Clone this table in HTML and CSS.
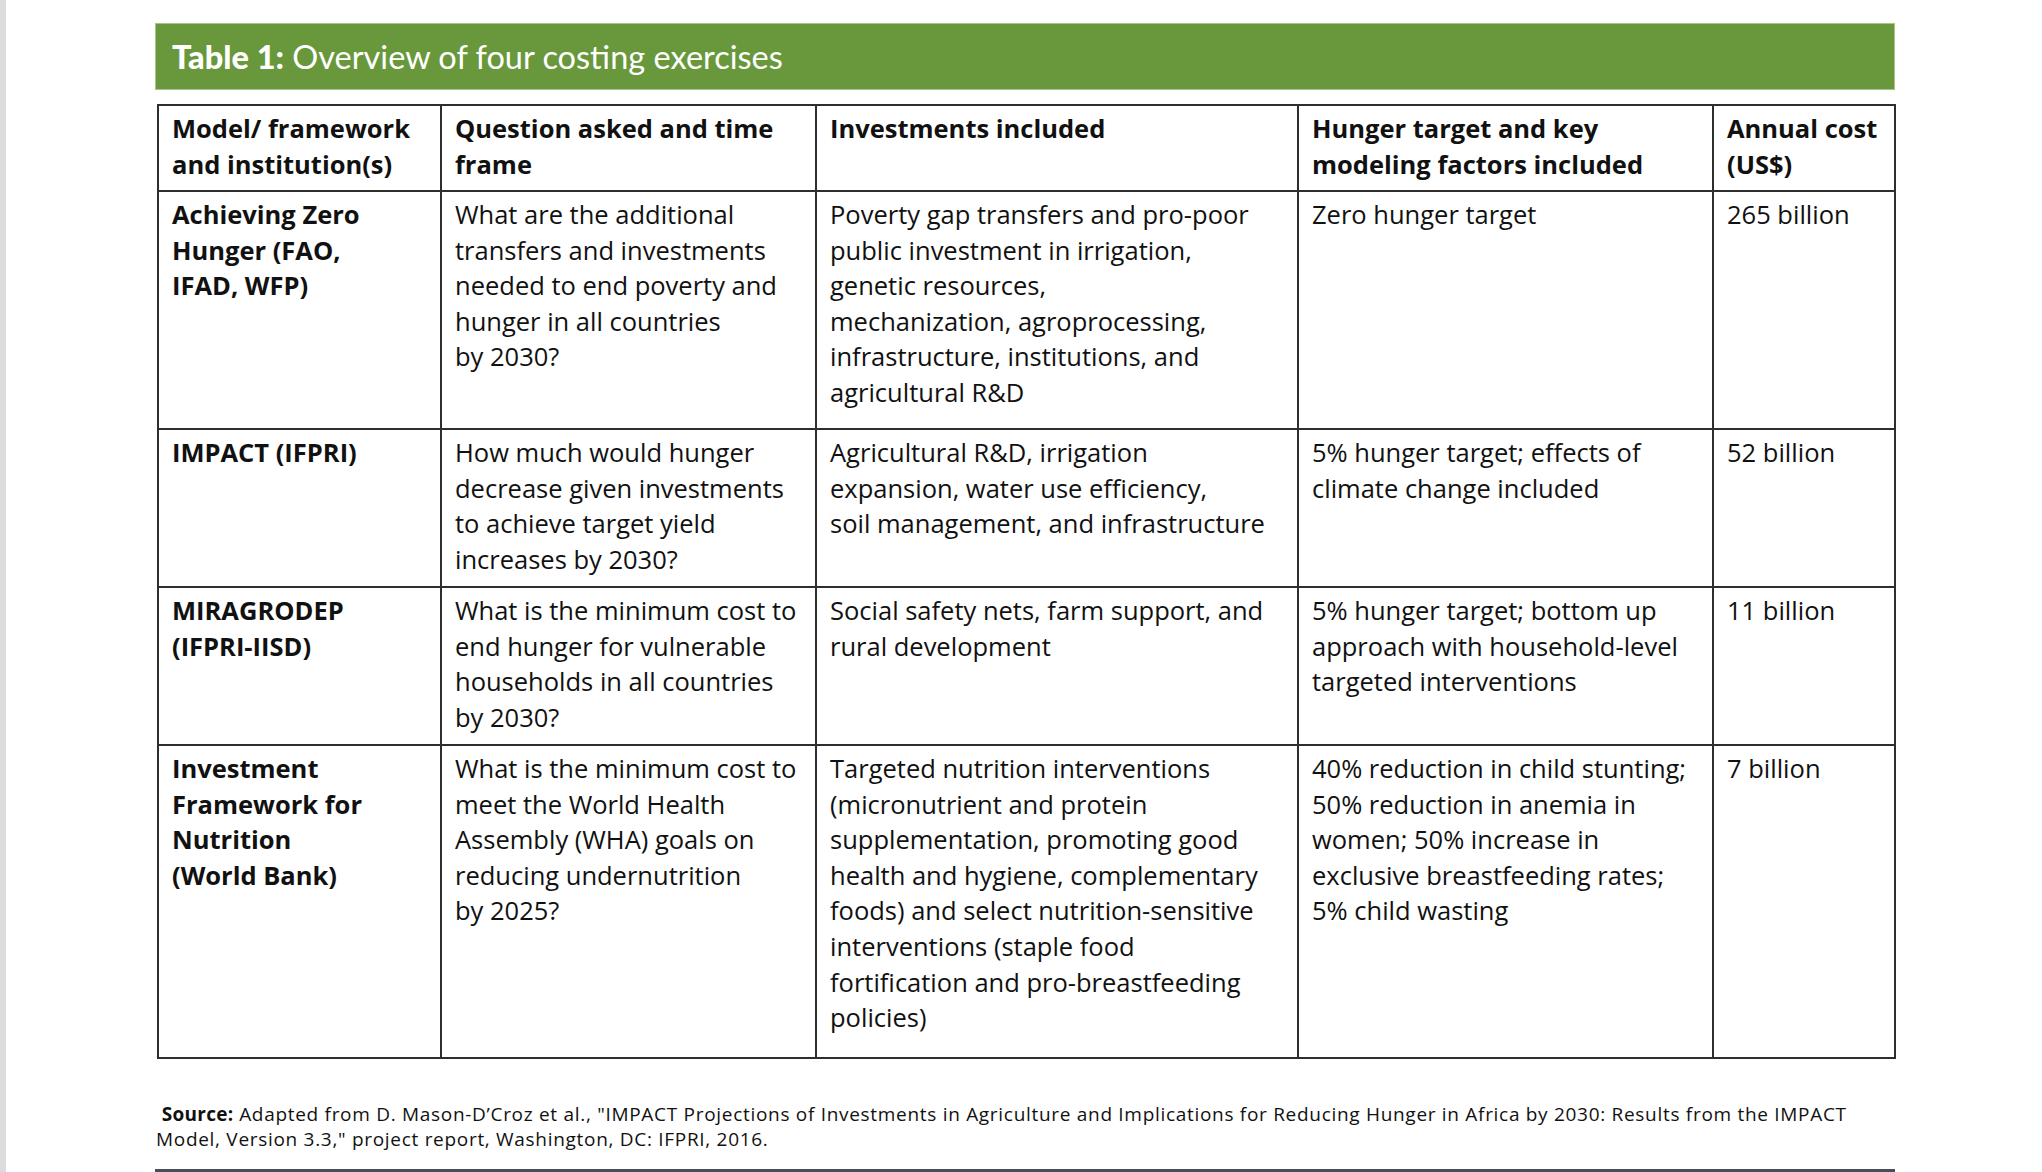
FILE: index.html
```html
<!DOCTYPE html>
<html lang="en">
<head>
<meta charset="utf-8">
<title>Table 1: Overview of four costing exercises</title>
<link rel="stylesheet" href="styles.css">
</head>
<body>
<div class="page">
  <div class="title-bar"><span class="title-label">Table 1:</span>&nbsp;Overview of four costing exercises</div>
  <table class="costs">
    <colgroup>
      <col class="c1"><col class="c2"><col class="c3"><col class="c4"><col class="c5">
    </colgroup>
    <thead>
      <tr class="row-head">
        <th>Model/ framework<br>and institution(s)</th>
        <th>Question asked and time<br>frame</th>
        <th>Investments included</th>
        <th>Hunger target and key<br>modeling factors included</th>
        <th>Annual cost<br>(US$)</th>
      </tr>
    </thead>
    <tbody>
      <tr class="row-1">
        <td class="name">Achieving Zero<br>Hunger (FAO,<br>IFAD, WFP)</td>
        <td>What are the additional<br>transfers and investments<br>needed to end poverty and<br>hunger in all countries<br>by 2030?</td>
        <td>Poverty gap transfers and pro-poor<br>public investment in irrigation,<br>genetic resources,<br>mechanization, agroprocessing,<br>infrastructure, institutions, and<br>agricultural R&amp;D</td>
        <td>Zero hunger target</td>
        <td>265 billion</td>
      </tr>
      <tr class="row-2">
        <td class="name">IMPACT (IFPRI)</td>
        <td>How much would hunger<br>decrease given investments<br>to achieve target yield<br>increases by 2030?</td>
        <td>Agricultural R&amp;D, irrigation<br>expansion, water use efficiency,<br>soil management, and infrastructure</td>
        <td>5% hunger target; effects of<br>climate change included</td>
        <td>52 billion</td>
      </tr>
      <tr class="row-3">
        <td class="name">MIRAGRODEP<br>(IFPRI-IISD)</td>
        <td>What is the minimum cost to<br>end hunger for vulnerable<br>households in all countries<br>by 2030?</td>
        <td>Social safety nets, farm support, and<br>rural development</td>
        <td>5% hunger target; bottom up<br>approach with household-level<br>targeted interventions</td>
        <td>11 billion</td>
      </tr>
      <tr class="row-4">
        <td class="name">Investment<br>Framework for<br>Nutrition<br>(World Bank)</td>
        <td>What is the minimum cost to<br>meet the World Health<br>Assembly (WHA) goals on<br>reducing undernutrition<br>by 2025?</td>
        <td>Targeted nutrition interventions<br>(micronutrient and protein<br>supplementation, promoting good<br>health and hygiene, complementary<br>foods) and select nutrition-sensitive<br>interventions (staple food<br>fortification and pro-breastfeeding<br>policies)</td>
        <td>40% reduction in child stunting;<br>50% reduction in anemia in<br>women; 50% increase in<br>exclusive breastfeeding rates;<br>5% child wasting</td>
        <td>7 billion</td>
      </tr>
    </tbody>
  </table>
  <p class="source">&nbsp;<strong>Source:</strong> Adapted from D. Mason-D’Croz et al., "IMPACT Projections of Investments in Agriculture and Implications for Reducing Hunger in Africa by 2030: Results from the IMPACT<br>Model, Version 3.3," project report, Washington, DC: IFPRI, 2016.</p>
  <div class="rule"></div>
</div>
</body>
</html>
```
FILE: styles.css
```css
html, body {
  margin: 0;
  padding: 0;
  background: #ffffff;
}

body {
  border-left: 6px solid #dcdcdf;
  min-height: 1172px;
  box-sizing: border-box;
  color: #111111;
  font-family: "Open Sans", "Liberation Sans", sans-serif;
}

.page {
  margin-left: 149px;
  width: 1740px;
  padding-top: 23px;
}

.title-bar {
  height: 67px;
  box-sizing: border-box;
  background: #68983b;
  border: 1px solid #a8c487;
  display: flex;
  align-items: center;
  padding-left: 16px;
  color: #ffffff;
  font-family: Lato, "Open Sans", sans-serif;
  font-size: 32.5px;
  white-space: nowrap;
}

.title-label {
  font-weight: 900;
}

.costs {
  margin-top: 14px;
  margin-left: 2px;
  width: 1737px;
  border-collapse: collapse;
  table-layout: fixed;
}

.c1 { width: 283px; }
.c2 { width: 375px; }
.c3 { width: 482px; }
.c4 { width: 415px; }
.c5 { width: 182px; }

.costs th,
.costs td {
  border: 2px solid #2e2e2e;
  vertical-align: top;
  text-align: left;
  padding: 5px 10px 0 13px;
  font-size: 25.5px;
  line-height: 35.6px;
  white-space: nowrap;
  color: #111111;
}

.costs th {
  font-weight: 700;
}

.costs td {
  font-weight: 400;
}

.costs td.name {
  font-weight: 700;
}

.costs tbody tr {
  border-top: 2px solid #444444;
}

.row-head { height: 86px; }
.row-1 { height: 238px; }
.row-2 { height: 158px; }
.row-3 { height: 158px; }
.row-4 { height: 313px; }

.source {
  margin: 43px 0 0 1px;
  font-size: 19px;
  line-height: 25px;
  letter-spacing: 0.7px;
  white-space: nowrap;
  color: #111111;
}

.source strong {
  font-weight: 700;
  letter-spacing: 0.3px;
}

.rule {
  margin-top: 17px;
  height: 5px;
  background: #454e5a;
}
```
